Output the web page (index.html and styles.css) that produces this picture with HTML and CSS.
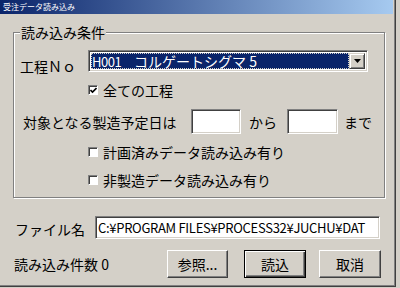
FILE: index.html
```html
<!DOCTYPE html>
<html lang="ja">
<head>
    <meta charset="UTF-8">
    <title>受注データ読み込み</title>
    <link rel="stylesheet" href="styles.css">
</head>
<body>
    <div class="window">
        <div class="titlebar">
            <span class="title">受注データ読み込み</span>
        </div>

        <fieldset class="group">
            <legend>読み込み条件</legend>

            <div class="row row-koutei">
                <span class="label koutei-label">工程Ｎｏ</span>
                <div class="combo">
                    <span class="combo-value"><span class="code">H001</span>コルゲートシグマ 5</span>
                    <span class="combo-btn">
                        <svg width="7" height="4" viewBox="0 0 7 4"><path d="M0 0h7L3.5 4z" fill="#000"/></svg>
                    </span>
                </div>
            </div>

            <div class="check-row check-all">
                <span class="check">
                    <svg width="7" height="7" viewBox="0 0 7 7"><path d="M0.5 3 L2.5 5 L6.5 1" fill="none" stroke="#000" stroke-width="1.6"/></svg>
                </span>
                <span>全ての工程</span>
            </div>

            <div class="row row-date">
                <span class="label date-label">対象となる製造予定日は</span>
                <span class="field date-from"></span>
                <span class="label kara">から</span>
                <span class="field date-to"></span>
                <span class="label made">まで</span>
            </div>

            <div class="check-row check-plan">
                <span class="check"></span>
                <span>計画済みデータ読み込み有り</span>
            </div>

            <div class="check-row check-non">
                <span class="check"></span>
                <span>非製造データ読み込み有り</span>
            </div>
        </fieldset>

        <div class="row row-file">
            <span class="label file-label">ファイル名</span>
            <div class="field file-path">C:¥PROGRAM FILES¥PROCESS32¥JUCHU¥DAT</div>
        </div>

        <div class="row row-bottom">
            <span class="label count">読み込み件数 0</span>
            <button class="btn btn-browse">参照...</button>
            <button class="btn btn-default">読込</button>
            <button class="btn btn-cancel">取消</button>
        </div>
    </div>
</body>
</html>
```

FILE: styles.css
```css
body {
    margin: 0;
    background-color: #d4d0c8;
    font-family: 'Noto Sans CJK JP', 'Noto Sans', sans-serif;
    font-size: 14px;
    color: #000;
    width: 400px;
    height: 288px;
    overflow: hidden;
}

.window {
    width: 396px;
    height: 287px;
    box-sizing: border-box;
    background-color: #d4d0c8;
    border-right: 1px solid #404040;
    border-bottom: 1px solid #404040;
    box-shadow: inset -1px -1px #808080;
    overflow: hidden;
}

.titlebar {
    height: 14px;
    margin-right: 2px;
    background: linear-gradient(to right, #0a246a, #a6caf0);
    display: flex;
    align-items: center;
    padding-left: 3px;
}

.title {
    color: #fff;
    font-size: 8px;
    line-height: 10px;
}

.label {
    line-height: 16px;
    white-space: nowrap;
}

/* group box */
.group {
    margin: 10px 0 0 13px;
    padding: 0;
    width: 372px;
    height: 174px;
    box-sizing: border-box;
    border: 1px solid #808080;
    box-shadow: inset 1px 1px #fff, 1px 1px #fff;
    min-width: 0;
}

.group legend {
    margin-left: 6px;
    padding: 0 1px;
    line-height: 16px;
    background-color: #d4d0c8;
}

.row {
    display: flex;
    align-items: center;
}

.row-koutei {
    margin-top: 10px;
    height: 22px;
    align-items: flex-start;
}

.koutei-label {
    margin-left: 6px;
    margin-top: 8px;
    width: 68px;
}

.combo {
    width: 280px;
    height: 22px;
    box-sizing: border-box;
    background-color: #fff;
    border: 1px solid;
    border-color: #808080 #fff #fff #808080;
    box-shadow: inset 1px 1px #404040, inset -1px -1px #d4d0c8;
    padding: 2px;
    display: flex;
}

.combo-value {
    flex: 1;
    background-color: #0a246a;
    color: #fff;
    outline: 1px dotted #d4d0c8;
    outline-offset: -1px;
    line-height: 16px;
    padding-left: 1px;
    white-space: nowrap;
}

.code {
    font-size: 13px;
    letter-spacing: -0.5px;
    margin-right: 13px;
}

.combo-btn {
    width: 16px;
    background-color: #d4d0c8;
    box-sizing: border-box;
    border: 1px solid;
    border-color: #d4d0c8 #404040 #404040 #d4d0c8;
    box-shadow: inset 1px 1px #fff, inset -1px -1px #808080;
    display: flex;
    align-items: center;
    justify-content: center;
}

/* checkboxes */
.check-row {
    display: flex;
    align-items: center;
    height: 16px;
    line-height: 16px;
    padding-left: 74px;
}

.check-all {
    margin-top: 10px;
}

.check-plan {
    margin-top: 10px;
}

.check-non {
    margin-top: 12px;
}

.check {
    width: 10px;
    height: 10px;
    box-sizing: border-box;
    background-color: #fff;
    border: 1px solid;
    border-color: #808080 #fff #fff #808080;
    box-shadow: inset 1px 1px #404040;
    margin-right: 5px;
    display: flex;
    align-items: center;
    justify-content: center;
    padding: 1px 0 0 1px;
}

/* date row */
.row-date {
    margin-top: 11px;
}

.date-label {
    margin-left: 9px;
    width: 168px;
}

.field {
    background-color: #fff;
    box-sizing: border-box;
    border: 1px solid;
    border-color: #808080 #fff #fff #808080;
    box-shadow: inset 1px 1px #404040, inset -1px -1px #d4d0c8;
}

.date-from {
    width: 50px;
    height: 25px;
}

.date-to {
    width: 51px;
    height: 25px;
}

.kara {
    margin-left: 8px;
    width: 38px;
}

.made {
    margin-left: 6px;
}

/* file row */
.row-file {
    margin-top: 18px;
}

.file-label {
    margin-left: 15px;
    width: 80px;
    margin-top: 2px;
}

.file-path {
    width: 285px;
    height: 23px;
    padding-left: 2px;
    line-height: 21px;
    font-size: 13px;
    letter-spacing: -0.3px;
    white-space: nowrap;
    overflow: hidden;
}

/* bottom row */
.row-bottom {
    margin-top: 11px;
}

.count {
    margin-left: 14px;
    width: 153px;
}

.btn {
    height: 28px;
    width: 61px;
    padding: 0;
    font-family: inherit;
    font-size: 14px;
    color: #000;
    background-color: #d4d0c8;
    border: 1px solid;
    border-color: #fff #404040 #404040 #fff;
    box-shadow: inset -1px -1px #808080;
}

.btn-default {
    margin-left: 16px;
    width: 62px;
    border-color: #000;
    box-shadow: inset 1px 1px #fff, inset -1px -1px #404040, inset -2px -2px #808080;
}

.btn-cancel {
    margin-left: 13px;
    width: 62px;
}
```
